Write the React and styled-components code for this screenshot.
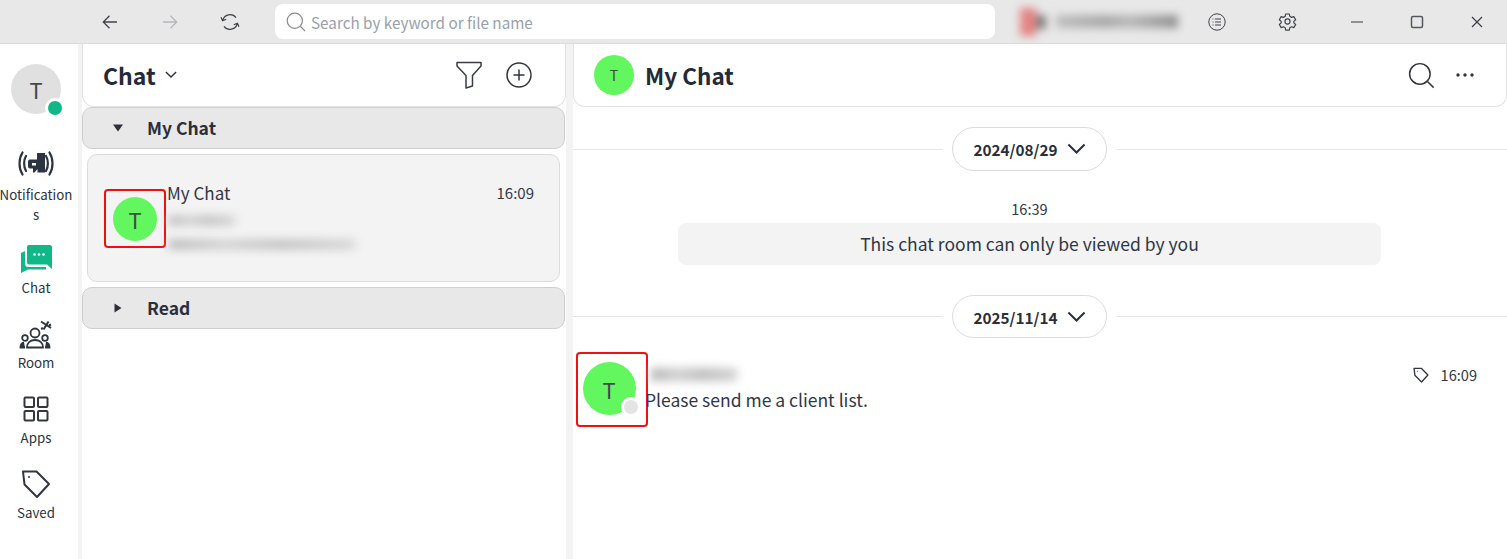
import React from "react";
import styled, { createGlobalStyle } from "styled-components";

const Global = createGlobalStyle`
  html, body { margin: 0; padding: 0; background: #fff; }
  body { font-family: "Noto Sans CJK JP", "Noto Sans", sans-serif; color: #2a2f3c; overflow: hidden; }
  * { box-sizing: border-box; }
`;
const Shell = styled.div`width:1507px;height:559px;display:flex;flex-direction:column;background:#f3f3f3;overflow:hidden;`;
const TitleBar = styled.header`height:44px;flex:none;background:#e8e8e8;display:flex;align-items:center;padding-left:80px;border-bottom:1px solid #dcdcdc;`;
const TitleButton = styled.div`width:${p => p.$w || 60}px;height:43px;flex:none;display:flex;align-items:center;justify-content:center;color:${p => p.$dim ? "#b5b7bb" : "#40434b"};`;
const SearchBox = styled.div`width:720px;height:35px;margin:0 25px 0 15px;background:#fff;border-radius:8px;display:flex;align-items:center;gap:5px;padding-left:11px;color:#9a9fac;font-size:15.25px;line-height:20px;`;
const SearchGlyph = styled.span`display:flex;color:#8a8a8a;`;
const BlurLogo = styled.div`width:160px;height:24px;margin-right:7px;display:flex;align-items:center;gap:10px;filter:blur(4px);`;
const LogoMark = styled.span`width:16px;height:28px;background:#e58484;display:block;`;
const LogoMark2 = styled.span`width:10px;height:14px;background:#7c7c7c;display:block;margin-left:-10px;`;
const LogoText = styled.span`width:122px;height:13px;background:linear-gradient(90deg,#bdbdbd,#a8a8a8 40%,#b8b8b8 60%,#8f8f8f);display:block;`;

const Body = styled.div`flex:1;display:flex;min-height:0;`;
const Nav = styled.nav`width:78px;flex:none;background:#fff;display:flex;flex-direction:column;align-items:center;padding:20px 6px 0 0;`;
const Avatar = styled.div`position:relative;flex:none;width:${p => p.$size}px;height:${p => p.$size}px;border-radius:50%;background:${p => p.$bg || "#62f75f"};color:#44484f;display:flex;align-items:center;justify-content:center;font-size:${p => p.$font}px;line-height:1;`;
const Status = styled.span`position:absolute;right:${p => p.$r}px;bottom:${p => p.$b}px;width:14px;height:14px;border-radius:50%;background:${p => p.$color};border:3px solid #fff;box-sizing:content-box;`;
const NavItem = styled.div`width:73px;flex:none;margin-top:${p => p.$mt || 0}px;display:flex;flex-direction:column;align-items:center;font-size:13.3px;line-height:20px;color:#2a3140;text-align:center;word-break:break-all;height:${p => p.$h}px;`;
const NavIcon = styled.div`height:34px;flex:none;display:flex;align-items:center;justify-content:center;margin-bottom:${p => p.$mb || 2}px;`;

const Gutter = styled.div`width:${p => p.$w}px;flex:none;`;
const ListPane = styled.section`width:484px;flex:none;display:flex;flex-direction:column;background:#fff;`;
const ListHeader = styled.div`height:63px;flex:none;background:#fff;border:1px solid #e3e3e3;border-top:none;border-radius:0 0 12px 12px;display:flex;align-items:center;gap:9px;padding:0 33px 0 20px;`;
const HeaderTitle = styled.div`font-size:${p => p.$font || 23}px;line-height:32px;font-weight:700;color:#232a38;`;
const Spacer = styled.div`flex:1;`;
const Group = styled.div`height:42px;flex:none;margin-right:1px;background:#e8e8e8;border:1px solid #cfcfcf;border-radius:10px;display:flex;align-items:center;font-size:17.5px;line-height:24px;font-weight:700;color:#2a2f3c;padding:0 0 0 29px;gap:23px;`;
const ChatCard = styled.div`height:128px;flex:none;margin:5px 6px 5px 5px;background:#f3f3f3;border:1px solid #dcdcdc;border-radius:10px;display:flex;align-items:flex-start;padding:24px 25px 0 16px;`;
const Highlight = styled.div`flex:none;margin-top:${p => p.$mt || 0}px;border:2px solid #f01010;border-radius:4px;width:${p => p.$w}px;height:${p => p.$h}px;display:flex;align-items:center;justify-content:center;padding:${p => p.$pad || "0"};`;
const CardMain = styled.div`flex:1;padding:2px 0 0 1px;`;
const CardTop = styled.div`display:flex;justify-content:space-between;align-items:center;font-size:17px;line-height:24px;color:#333845;`;
const CardTime = styled.span`font-size:15px;`;
const BlurLine = styled.div`height:${p => p.$h || 9}px;width:${p => p.$w}px;margin:${p => p.$m};background:linear-gradient(90deg,#b4b4b4,#cfcfcf 30%,#bdbdbd 60%,#d2d2d2);filter:blur(5px);`;

const ChatPane = styled.section`flex:1;background:#fff;display:flex;flex-direction:column;min-width:0;`;
const ChatHeader = styled.div`height:63px;flex:none;border:1px solid #e3e3e3;border-top:none;border-radius:0 0 12px 12px;display:flex;align-items:center;padding:0 32px 0 20px;gap:11px;`;
const Tools = styled.div`display:flex;align-items:center;gap:${p => p.$gap}px;color:#33363d;`;
const DateRow = styled.div`display:flex;align-items:center;margin-top:${p => p.$mt}px;height:${p => p.$h}px;flex:none;&::before,&::after{content:"";height:1px;background:#e6e6e6;flex:none;} &::before{width:370px;margin-right:9px;} &::after{flex:1;margin-left:10px;}`;
const DatePill = styled.div`width:155px;height:100%;border:1px solid #dcdcdc;border-radius:22px;display:flex;align-items:center;justify-content:center;gap:9px;font-size:15.3px;line-height:22px;font-weight:700;color:#2a2f3c;background:#fff;`;
const SystemBlock = styled.div`margin-top:27px;display:flex;flex-direction:column;align-items:center;padding-left:105px;padding-right:126px;`;
const SystemTime = styled.div`font-size:14.6px;line-height:22px;color:#333845;`;
const Notice = styled.div`width:703px;height:42px;margin-top:3px;background:#f3f3f3;border-radius:8px;display:flex;align-items:center;justify-content:center;font-size:17.5px;line-height:24px;color:#2f3646;`;
const Message = styled.div`display:flex;margin:14px 30px 0 3px;align-items:flex-start;`;
const MessageBody = styled.div`flex:1;padding-top:16px;margin-left:-3px;min-width:0;`;
const MessageText = styled.div`font-size:17.5px;line-height:24px;margin-top:7px;color:#2f3646;`;
const MessageMeta = styled.div`display:flex;align-items:center;gap:12px;margin-top:12px;font-size:14.6px;line-height:22px;color:#333845;`;

const Back = () => <svg width="20" height="20" viewBox="0 0 20 20" fill="none" stroke="currentColor" strokeWidth="1.3"><path d="M17 10H3.500M9.500 3.800 3.300 10l6.200 6.200" /></svg>;
const Forward = () => <svg width="20" height="20" viewBox="0 0 20 20" fill="none" stroke="currentColor" strokeWidth="1.3"><path d="M3 10h13.500M10.500 3.800l6.200 6.200-6.200 6.200" /></svg>;
const Refresh = () => <svg width="20" height="20" viewBox="0 0 20 20" fill="none" stroke="currentColor" strokeWidth="1.2"><path d="M2.700 8.500A7.500 7.500 0 0 1 16 5.600M17.300 11.500A7.500 7.500 0 0 1 4 14.400M1 5.200l1.600 3.600 3.600-1.500M19 14.800l-1.600-3.600-3.600 1.500" /></svg>;
const SearchIcon = ({ s = 20, w = 1.2 }) => <svg width={s} height={s} viewBox="0 0 20 20" fill="none" stroke="currentColor" strokeWidth={w}><circle cx="8.800" cy="8.800" r="7.600" /><path d="m14.400 14.400 4.600 4.600" /></svg>;
const ListCircle = () => <svg width="18" height="18" viewBox="0 0 18 18" fill="none" stroke="currentColor" strokeWidth="1"><circle cx="9" cy="9" r="8.200" /><path d="M7 6h6M7 9h6M7 12h6M4.500 6h1M4.500 9h1M4.500 12h1" /></svg>;
const Gear = () => <svg width="19" height="19" viewBox="0 0 24 24" fill="none" stroke="currentColor" strokeWidth="1.500"><path d="M9.700 2.500h4.600l.6 3 2.200 1.300 2.900-1 2.300 4-2.300 2v1.900l2.300 2-2.300 4-2.900-1-2.200 1.300-.6 3H9.700l-.6-3-2.200-1.300-2.900 1-2.300-4 2.300-2v-1.900l-2.300-2 2.300-4 2.900 1 2.200-1.300z" strokeLinejoin="round" /><circle cx="12" cy="12" r="3.200" /></svg>;
const Minimize = () => <svg width="14" height="14" viewBox="0 0 14 14" stroke="#6a6c72" strokeWidth="1.400"><path d="M1 7h12" /></svg>;
const Maximize = () => <svg width="14" height="14" viewBox="0 0 14 14" fill="none" stroke="#55575d" strokeWidth="1.500"><rect x="1.500" y="1.500" width="11" height="11" rx="1.500" /></svg>;
const Close = () => <svg width="14" height="14" viewBox="0 0 14 14" stroke="#3c3e44" strokeWidth="1.200"><path d="m2 2 10 10M12 2 2 12" /></svg>;
const Chevron = ({ w = 12, sw = 1.500 }) => <svg width={w} height={w * 0.6} viewBox="0 0 20 12" fill="none" stroke="currentColor" strokeWidth={sw * 20 / w}><path d="m1.500 1.500 8.500 8.500 8.500-8.500" /></svg>;
const Broadcast = () => <svg width="36" height="26" viewBox="0 0 36 26" fill="none"><g stroke="#2d3340" strokeWidth="2.200" strokeLinecap="round"><path d="M4.500 1.500C.5 8 .5 17 4.500 23.500M8 5C5.500 9 5.500 16 8 20M31.500 1.500C35.500 8 35.500 17 31.500 23.500M28 5C30.500 9 30.500 16 28 20" /></g><path d="M12 8.500h7V2h8v19.500h-7.500V18l-3 3.500h-1.500v-4h-3a2 2 0 0 1-2-2V10.500a2 2 0 0 1 2-2z" fill="#2d3340" /><rect x="14" y="12" width="4" height="2.500" fill="#fff" /></svg>;
const ChatIcon = () => <svg width="31" height="28" viewBox="0 0 31 28" fill="#0fb987"><path d="M6 2a2 2 0 0 1 2-2H29a2 2 0 0 1 2 2V24L26 19.500H8a2 2 0 0 1-2-2z" /><path d="M0 8L4 6V18.500a3.500 3.500 0 0 0 3.500 3.500H25V24.500H7L0 28z" /><g fill="#fff"><circle cx="13.500" cy="9.500" r="1.300" /><circle cx="18" cy="9.500" r="1.300" /><circle cx="22.500" cy="9.500" r="1.300" /></g></svg>;
const RoomIcon = () => <svg width="34" height="30" viewBox="0 0 34 30" fill="none" stroke="#2d3340" strokeWidth="1.800"><circle cx="16" cy="14" r="4.500" /><path d="M8 28.500c0-5 3.500-7.500 8-7.500s8 2.500 8 7.500z" /><circle cx="6" cy="19" r="2.800" /><circle cx="26" cy="19" r="2.800" /><path d="M6 28.500H1.500c0-2.500 1-4.500 3.500-5M26 28.500h4.500c0-2.500-1-4.500-3.500-5" fill="#2d3340" /><path d="M22 2.500l10 6.500M29.500 2.500l-5 8M22.500 8.500l1 2M30 6.500l2-1" strokeWidth="2" /></svg>;
const AppsIcon = () => <svg width="26" height="26" viewBox="0 0 26 26" fill="none" stroke="#33363f" strokeWidth="2"><rect x="1.500" y="1.500" width="9.500" height="9.500" rx="1" /><rect x="15" y="1.500" width="9.500" height="9.500" rx="1" /><rect x="1.500" y="15" width="9.500" height="9.500" rx="1" /><rect x="15" y="15" width="9.500" height="9.500" rx="1" /></svg>;
const TagIcon = ({ s = 30, w = 2 }) => <svg width={s} height={s} viewBox="0 0 30 30" fill="none" stroke="#33363f" strokeWidth={w} strokeLinejoin="round"><path d="M2 2.500h13.500L28 15 16 28 3.500 15.500z" /><circle cx="8" cy="8" r="1" fill="#33363f" stroke="none" /></svg>;
const Funnel = () => <svg width="26" height="28" viewBox="0 0 26 28" fill="none" stroke="#3a3d45" strokeWidth="1.500" strokeLinejoin="round"><path d="M1 1.500h24v3.500l-8.500 9.500v10.500l-6.500 2V14.500L1 5z" /></svg>;
const PlusCircle = () => <svg width="26" height="26" viewBox="0 0 26 26" fill="none" stroke="#33363f" strokeWidth="1.500"><circle cx="13" cy="13" r="12" /><path d="M13 7.500v11M7.500 13h11" /></svg>;
const Dots = () => <svg width="18" height="4" viewBox="0 0 18 4" fill="#33363f"><circle cx="2" cy="2" r="1.700" /><circle cx="9" cy="2" r="1.700" /><circle cx="16" cy="2" r="1.700" /></svg>;
const Tri = ({ right }) => <svg width="12" height="12" viewBox="0 0 12 12" fill="#2d3038">{right ? <path d="M2.500 1.500 9.500 6l-7 4.500z" /> : <path d="M1 2.500h10L6 9.500z" />}</svg>;

export default function App() {
  return (
    <Shell>
      <Global />
      <TitleBar>
        <TitleButton><Back /></TitleButton>
        <TitleButton $dim><Forward /></TitleButton>
        <TitleButton><Refresh /></TitleButton>
        <SearchBox><SearchGlyph><SearchIcon /></SearchGlyph>Search by keyword or file name</SearchBox>
        <BlurLogo><LogoMark /><LogoMark2 /><LogoText /></BlurLogo>
        <TitleButton><ListCircle /></TitleButton>
        <TitleButton $w={80}><Gear /></TitleButton>
        <TitleButton><Minimize /></TitleButton>
        <TitleButton><Maximize /></TitleButton>
        <TitleButton><Close /></TitleButton>
      </TitleBar>
      <Body>
        <Nav>
          <Avatar $size={50} $font={22} $bg="#e0e0e0">T<Status $r={-4} $b={-4} $color="#0fb987" /></Avatar>
          <NavItem $h={95} $mt={33}><NavIcon $mb={4}><Broadcast /></NavIcon>Notifications</NavItem>
          <NavItem $h={75}><NavIcon><ChatIcon /></NavIcon>Chat</NavItem>
          <NavItem $h={75}><NavIcon><RoomIcon /></NavIcon>Room</NavItem>
          <NavItem $h={75}><NavIcon><AppsIcon /></NavIcon>Apps</NavItem>
          <NavItem $h={75}><NavIcon><TagIcon /></NavIcon>Saved</NavItem>
        </Nav>
        <Gutter $w={4} />
        <ListPane>
          <ListHeader>
            <HeaderTitle>Chat</HeaderTitle>
            <Chevron w={12} sw={1.400} />
            <Spacer />
            <Tools $gap={24}><Funnel /><PlusCircle /></Tools>
          </ListHeader>
          <Group><Tri />My Chat</Group>
          <ChatCard>
            <Highlight $w={62} $h={59} $mt={10}><Avatar $size={44} $font={22}>T</Avatar></Highlight>
            <CardMain>
              <CardTop><span>My Chat</span><CardTime>16:09</CardTime></CardTop>
              <BlurLine $w={66} $m="11px 0 0 2px" />
              <BlurLine $w={186} $m="15px 0 0 2px" />
            </CardMain>
          </ChatCard>
          <Group><Tri right />Read</Group>
        </ListPane>
        <Gutter $w={7} />
        <ChatPane>
          <ChatHeader>
            <Avatar $size={40} $font={14}>T</Avatar>
            <HeaderTitle $font={22.500}>My Chat</HeaderTitle>
            <Spacer />
            <Tools $gap={21}><SearchIcon s={27} w={1.100} /><Dots /></Tools>
          </ChatHeader>
          <DateRow $mt={20} $h={44}><DatePill>2024/08/29<Chevron w={19} sw={2} /></DatePill></DateRow>
          <SystemBlock>
            <SystemTime>16:39</SystemTime>
            <Notice>This chat room can only be viewed by you</Notice>
          </SystemBlock>
          <DateRow $mt={30} $h={43}><DatePill>2025/11/14<Chevron w={19} sw={2} /></DatePill></DateRow>
          <Message>
            <Highlight $w={72} $h={75} $pad="0 6px 2px 0">
              <Avatar $size={53} $font={22}>T<Status $r={-5} $b={-2} $color="#e4e4e4" /></Avatar>
            </Highlight>
            <MessageBody>
              <BlurLine $w={86} $h={13} $m="0 0 0 6px" />
              <MessageText>Please send me a client list.</MessageText>
            </MessageBody>
            <MessageMeta><TagIcon s={16} w={2.500} />16:09</MessageMeta>
          </Message>
        </ChatPane>
      </Body>
    </Shell>
  );
}
